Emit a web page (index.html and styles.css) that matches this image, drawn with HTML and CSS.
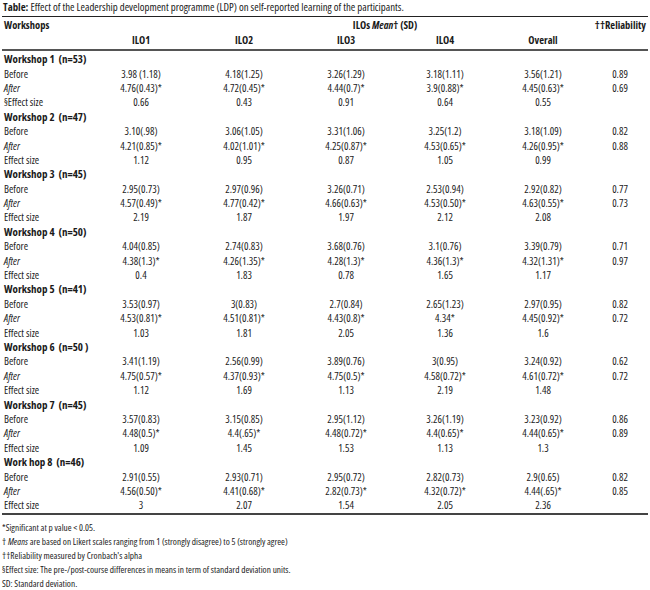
FILE: index.html
```html
<!DOCTYPE html>
<html>
<head>
<meta charset="utf-8">
<link rel="stylesheet" href="styles.css">
</head>
<body>
<div class="page">
  <p class="title"><b>Table:</b> Effect of the Leadership development programme (LDP) on self-reported learning of the participants.</p>
  <table class="tbl">
    <colgroup>
      <col class="c0"><col class="c1"><col class="c2"><col class="c3"><col class="c4"><col class="c5"><col class="c6">
    </colgroup>
    <thead>
      <tr class="h1">
        <th class="left">Workshops</th>
        <th colspan="5" class="span">ILOs <i>Mean</i>† (SD)</th>
        <th class="right">††Reliability</th>
      </tr>
      <tr class="h2">
        <th></th><th>ILO1</th><th>ILO2</th><th>ILO3</th><th>ILO4</th><th>Overall</th><th></th>
      </tr>
    </thead>
    <tbody>
      <tr class="grp first"><td colspan="7">Workshop 1 &nbsp;(n=53)</td></tr>
      <tr><td>Before</td><td>3.98 (1.18)</td><td>4.18(1.25)</td><td>3.26(1.29)</td><td>3.18(1.11)</td><td>3.56(1.21)</td><td>0.89</td></tr>
      <tr><td><i>After</i></td><td>4.76(0.43)*</td><td>4.72(0.45)*</td><td>4.44(0.7)*</td><td>3.9(0.88)*</td><td>4.45(0.63)*</td><td>0.69</td></tr>
      <tr><td>§Effect size</td><td>0.66</td><td>0.43</td><td>0.91</td><td>0.64</td><td>0.55</td><td></td></tr>

      <tr class="grp"><td colspan="7">Workshop 2 &nbsp;(n=47)</td></tr>
      <tr><td>Before</td><td>3.10(.98)</td><td>3.06(1.05)</td><td>3.31(1.06)</td><td>3.25(1.2)</td><td>3.18(1.09)</td><td>0.82</td></tr>
      <tr><td><i>After</i></td><td>4.21(0.85)*</td><td>4.02(1.01)*</td><td>4.25(0.87)*</td><td>4.53(0.65)*</td><td>4.26(0.95)*</td><td>0.88</td></tr>
      <tr><td>Effect size</td><td>1.12</td><td>0.95</td><td>0.87</td><td>1.05</td><td>0.99</td><td></td></tr>

      <tr class="grp"><td colspan="7">Workshop 3 &nbsp;(n=45)</td></tr>
      <tr><td>Before</td><td>2.95(0.73)</td><td>2.97(0.96)</td><td>3.26(0.71)</td><td>2.53(0.94)</td><td>2.92(0.82)</td><td>0.77</td></tr>
      <tr><td><i>After</i></td><td>4.57(0.49)*</td><td>4.77(0.42)*</td><td>4.66(0.63)*</td><td>4.53(0.50)*</td><td>4.63(0.55)*</td><td>0.73</td></tr>
      <tr><td>Effect size</td><td>2.19</td><td>1.87</td><td>1.97</td><td>2.12</td><td>2.08</td><td></td></tr>

      <tr class="grp"><td colspan="7">Workshop 4 &nbsp;(n=50)</td></tr>
      <tr><td>Before</td><td>4.04(0.85)</td><td>2.74(0.83)</td><td>3.68(0.76)</td><td>3.1(0.76)</td><td>3.39(0.79)</td><td>0.71</td></tr>
      <tr><td><i>After</i></td><td>4.38(1.3)*</td><td>4.26(1.35)*</td><td>4.28(1.3)*</td><td>4.36(1.3)*</td><td>4.32(1.31)*</td><td>0.97</td></tr>
      <tr><td>Effect size</td><td>0.4</td><td>1.83</td><td>0.78</td><td>1.65</td><td>1.17</td><td></td></tr>

      <tr class="grp"><td colspan="7">Workshop 5 &nbsp;(n=41)</td></tr>
      <tr><td>Before</td><td>3.53(0.97)</td><td>3(0.83)</td><td>2.7(0.84)</td><td>2.65(1.23)</td><td>2.97(0.95)</td><td>0.82</td></tr>
      <tr><td><i>After</i></td><td>4.53(0.81)*</td><td>4.51(0.81)*</td><td>4.43(0.8)*</td><td>4.34*</td><td>4.45(0.92)*</td><td>0.72</td></tr>
      <tr><td>Effect size</td><td>1.03</td><td>1.81</td><td>2.05</td><td>1.36</td><td>1.6</td><td></td></tr>

      <tr class="grp"><td colspan="7">Workshop 6 &nbsp;(n=50 )</td></tr>
      <tr><td>Before</td><td>3.41(1.19)</td><td>2.56(0.99)</td><td>3.89(0.76)</td><td>3(0.95)</td><td>3.24(0.92)</td><td>0.62</td></tr>
      <tr><td><i>After</i></td><td>4.75(0.57)*</td><td>4.37(0.93)*</td><td>4.75(0.5)*</td><td>4.58(0.72)*</td><td>4.61(0.72)*</td><td>0.72</td></tr>
      <tr><td>Effect size</td><td>1.12</td><td>1.69</td><td>1.13</td><td>2.19</td><td>1.48</td><td></td></tr>

      <tr class="grp"><td colspan="7">Workshop 7 &nbsp;(n=45)</td></tr>
      <tr><td>Before</td><td>3.57(0.83)</td><td>3.15(0.85)</td><td>2.95(1.12)</td><td>3.26(1.19)</td><td>3.23(0.92)</td><td>0.86</td></tr>
      <tr><td><i>After</i></td><td>4.48(0.5)*</td><td>4.4(.65)*</td><td>4.48(0.72)*</td><td>4.4(0.65)*</td><td>4.44(0.65)*</td><td>0.89</td></tr>
      <tr><td>Effect size</td><td>1.09</td><td>1.45</td><td>1.53</td><td>1.13</td><td>1.3</td><td></td></tr>

      <tr class="grp"><td colspan="7">Work hop 8 &nbsp;(n=46)</td></tr>
      <tr><td>Before</td><td>2.91(0.55)</td><td>2.93(0.71)</td><td>2.95(0.72)</td><td>2.82(0.73)</td><td>2.9(0.65)</td><td>0.82</td></tr>
      <tr><td><i>After</i></td><td>4.56(0.50)*</td><td>4.41(0.68)*</td><td>2.82(0.73)*</td><td>4.32(0.72)*</td><td>4.44(.65)*</td><td>0.85</td></tr>
      <tr class="last"><td>Effect size</td><td>3</td><td>2.07</td><td>1.54</td><td>2.05</td><td>2.36</td><td></td></tr>
    </tbody>
  </table>
  <div class="notes">
    <p>*Significant at p value &lt; 0.05.</p>
    <p>† <i>Means</i> are based on Likert scales ranging from 1 (strongly disagree) to 5 (strongly agree)</p>
    <p>††Reliability measured by Cronbach's alpha</p>
    <p>§Effect size: The pre-/post-course differences in means in term of standard deviation units.</p>
    <p>SD: Standard deviation.</p>
  </div>
</div>
</body>
</html>
```

FILE: styles.css
```css
html, body {
  margin: 0;
  padding: 0;
  background: #ffffff;
}
body {
  font-family: "Open Sans", "Liberation Sans", sans-serif;
  font-stretch: 75%;
  font-size: 10.5px;
  color: #1a1a1a;
}
.page {
  padding: 0 2px;
  width: 646px;
}
.title {
  margin: 0;
  height: 16px;
  line-height: 13px;
  padding-left: 1px;
  font-size: 10.8px;
}
.title b { font-weight: 700; }
.tbl {
  width: 646px;
  border-collapse: collapse;
  table-layout: fixed;
  border-top: 1.5px solid #222;
}
.c0 { width: 88px; }
.c1 { width: 102px; }
.c2 { width: 104px; }
.c3 { width: 100px; }
.c4 { width: 98px; }
.c5 { width: 98px; }
.c6 { width: 56px; }
.tbl th {
  font-weight: 700;
  text-align: center;
  padding: 0;
  white-space: nowrap;
}
.h1 th {
  height: 16px;
  vertical-align: middle;
}
.h2 th {
  height: 16px;
  border-bottom: 2px solid #555;
  vertical-align: top;
}
.tbl th.left { text-align: left; padding-left: 2px; }
.tbl th.right { text-align: right; padding-right: 2px; }
.tbl th.span { text-align: center; padding-left: 88px; }
.tbl td {
  height: 14.4px;
  padding: 0;
  text-align: center;
  white-space: nowrap;
  line-height: 12px;
}
.tbl td:first-child {
  text-align: left;
  padding-left: 2px;
}
.tbl tr.grp td {
  font-weight: 700;
  font-size: 11px;
  text-align: left;
}
.tbl tr.last td {
  border-bottom: 2px solid #444;
}
.tbl tr.first td {
  padding-top: 1px;
}
.notes {
  padding-top: 6px;
  font-size: 9.3px;
}
.notes p {
  margin: 0;
  height: 14px;
  line-height: 14px;
}
```
